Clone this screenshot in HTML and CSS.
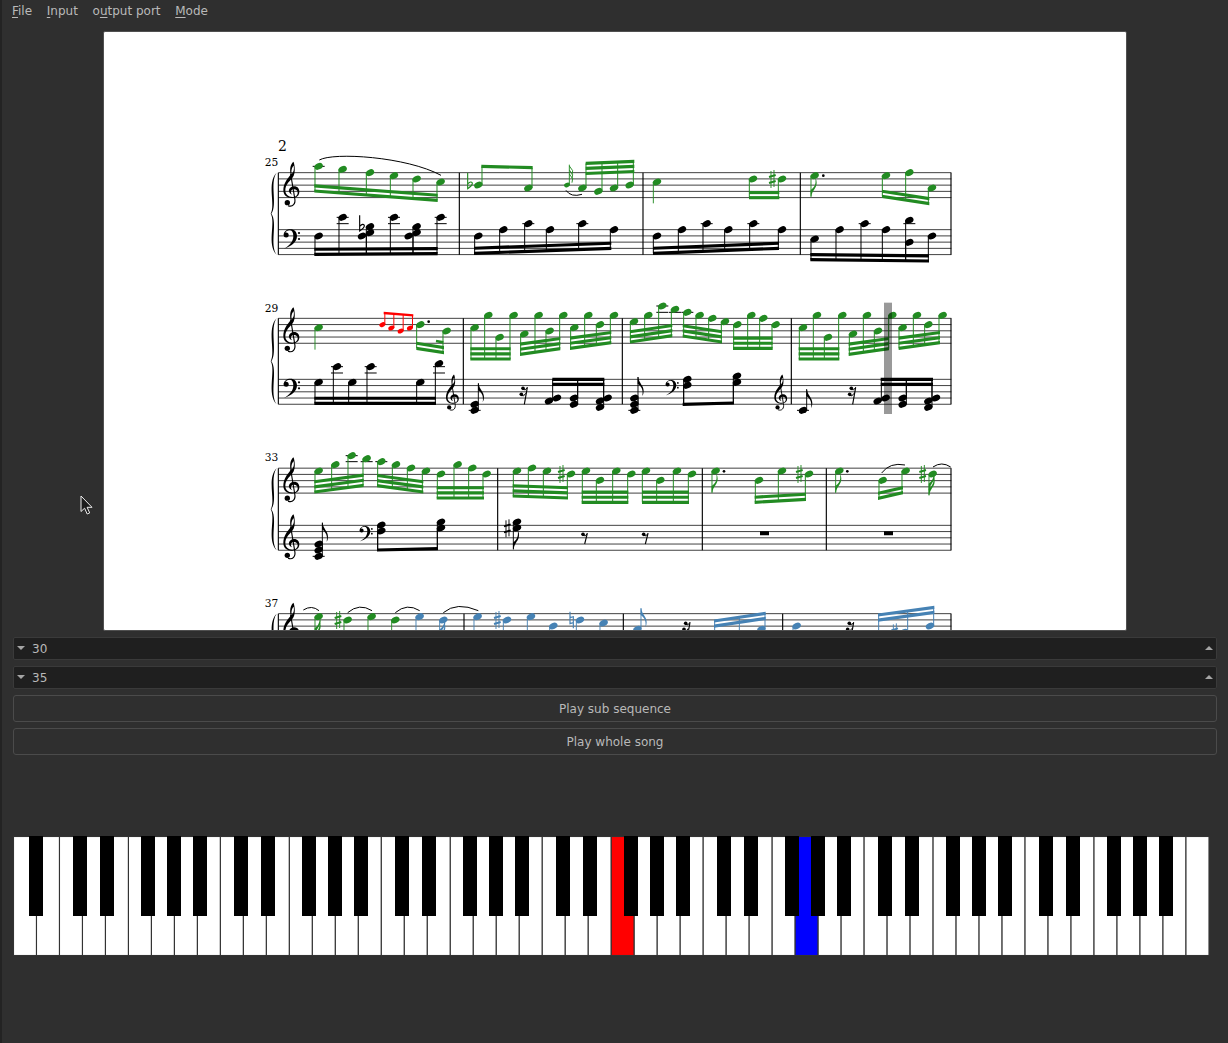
FILE: index.html
```html
<!DOCTYPE html>
<html lang="en">
<head>
<meta charset="utf-8">
<title>Piano trainer</title>
<link rel="stylesheet" href="styles.css">
</head>
<body>
<nav class="menu">
  <span><u>F</u>ile</span><span><u>I</u>nput</span><span>o<u>u</u>tput port</span><span><u>M</u>ode</span>
</nav>
<main class="content">
  <div class="score"><svg id="score" width="1022" height="598" viewBox="104 32 1022 598"></svg></div>
  <div class="controls">
    <div class="spin"><i class="down"></i><span>30</span><i class="up"></i></div>
    <div class="spin"><i class="down"></i><span>35</span><i class="up"></i></div>
    <button class="btn">Play sub sequence</button>
    <button class="btn">Play whole song</button>
  </div>
  <svg id="piano" class="piano" width="1198" height="122" viewBox="0 0 1198 122"></svg>
</main>
<svg class="pointer" width="14" height="22" viewBox="0 0 14 22"><path d="M1 1V16.5L4.6 13.2L7.2 19L9.7 17.9L7.1 12.3H12Z" fill="#1c1c1c" stroke="#eee" stroke-width="1"/></svg>
<script src="app.js"></script>
</body>
</html>
```
FILE: styles.css
```css
* { box-sizing: border-box; }
body {
  margin: 0;
  width: 1228px;
  height: 1043px;
  overflow: hidden;
  background: #2f2f2f;
  border-left: 2px solid #232323;
  color: #b9b9b9;
  font: 12px "DejaVu Sans", sans-serif;
}
.menu {
  display: flex;
  gap: 14.7px;
  height: 31px;
  padding: 4px 10px 0;
  line-height: 14px;
}
.menu u { text-underline-offset: 2px; }
.content {
  display: flex;
  flex-direction: column;
  padding: 0 11px;
}
.score {
  width: 1024px;
  height: 600px;
  margin-left: 90px;
  border: 1px solid #505050;
  border-radius: 2px;
  background: #fff;
}
.score svg { display: block; }
.controls {
  display: flex;
  flex-direction: column;
  width: 1204px;
  margin-top: 6px;
}
.spin {
  display: flex;
  align-items: center;
  height: 23px;
  margin-bottom: 6px;
  padding: 0 3px;
  border: 1px solid #3a3a3a;
  border-radius: 2px;
  background: #1f1f1f;
}
.spin span { flex: 1; margin-left: 7px; }
.spin i {
  margin-bottom: 2px;
  border-left: 4px solid transparent;
  border-right: 4px solid transparent;
}
.spin .down { border-top: 4px solid #a5a5a5; }
.spin .up { border-bottom: 4px solid #a5a5a5; }
.btn {
  height: 27px;
  margin: 0 0 6px;
  padding: 0;
  border: 1px solid #4b4b4b;
  border-radius: 3px;
  background: #2f2f2f;
  color: #b9b9b9;
  font: inherit;
}
.piano { display: block; margin-top: 75px; }
.pointer {
  position: absolute;
  left: 80px;
  top: 495px;
}
.num { font-family: "DejaVu Serif", serif; }
```
FILE: app.js
```js
const GREEN = '#228b22', BLUE = '#4682b4', RED = '#ff0000', BLACK = '#000';
let out = '';
const add = s => { out += s; };
const pairs = s => s.trim().split(/\s+/).map(p => p.split(',').map(Number));

// Frames use three units per pixel.
const frame = (x, y, draw) => {
  add(`<g transform="translate(${x} ${y}) scale(.33333)">`);
  draw();
  add('</g>');
};
const path = (d, c = BLACK, w = 0) =>
  add(`<path d="${d}" fill="${w ? 'none' : c}"${w ? ` stroke="${c}" stroke-width="${w}"` : ''}/>`);
const line = (x1, y1, x2, y2, c = BLACK, w = 3) =>
  add(`<line x1="${x1}" y1="${y1}" x2="${x2}" y2="${y2}" stroke="${c}" stroke-width="${w}"/>`);
const head = (x, y, c = BLACK, k = 1) =>
  add(`<ellipse cx="0" cy="0" rx="13.2" ry="9.2" fill="${c}" transform="translate(${x} ${y}) scale(${k}) rotate(-26)"/>`);
const heads = (s, c) => pairs(s).forEach(([x, y]) => head(x, y, c));
const ledgers = s => pairs(s).forEach(([x, y]) => line(x - 18, y, x + 18, y, BLACK, 3));
const dot = (x, y) => add(`<circle cx="${x}" cy="${y}" r="4"/>`);

// Outer beam runs x1,y1 to x2,y2; further beams step towards the heads.
const beam = (c, dir, x1, y1, x2, y2, n, notes, k = 1) => {
  pairs(notes).forEach(([x, y]) => {
    const sx = x - dir * (k < 1 ? 7.5 : 11);
    line(sx, y, sx, y1 + (y2 - y1) * (sx - x1) / (x2 - x1), c, 3);
    head(x, y, c, k);
  });
  for (let i = 0; i < n; i++) {
    const o = -dir * i * 15.3, t = k < 1 ? 3.6 : 4.7;
    path(`M${x1 - 2} ${y1 + o - t}L${x2 + 2} ${y2 + o - t}V${y2 + o + t}L${x1 - 2} ${y1 + o + t}Z`, c);
  }
};
const flag = (x, y, dir, c) =>
  add(`<path transform="translate(${x} ${y}) scale(1 ${dir})" d="M-1 0H1C3 20 17 25 17 42Q17 51 13 57Q16 40 9 30Q5 24 -1 20Z" fill="${c}"/>`);
const single = (c, dir, x, y, end, flags = 0) => {
  const sx = x - dir * 11;
  line(sx, y, sx, end, c, 2.8);
  head(x, y, c);
  for (let i = 0; i < flags; i++) flag(sx, end - dir * i * 15, -dir, c);
};
const treble = (x, y, k = 1) => add(`<g transform="translate(${x} ${y}) scale(${k})">
  <path fill-rule="evenodd" d="M30-89C22-82 18-68 22-50C12-38 0-24 0-3C0 13 13 21 27 20C42 19 48 11 48 1C48-9 41-16 31-15C20-14 14-4 18 3C20 7 23 9 27 10C21 5 21-4 30-6C38-7 43-2 43 4C43 12 36 17 27 17C14 17 6 9 6-3C6-18 16-28 27-40C34-48 35-60 34-72C33-82 32-86 30-89ZM31-77C33-66 31-58 25-52C23-62 26-73 31-77Z"/>
  <path d="M22-52L34 20C38 38 28 48 14 43" fill="none" stroke="#000" stroke-width="3.400"/><circle cx="12" cy="34" r="8"/></g>`);
const bass = (x, y, k = 1) => add(`<g transform="translate(${x} ${y}) scale(${k})">
  <path d="M1-4C2-14 11-20 21-20C33-20 41-12 41 0C41 18 24 31 2 38C20 28 30 16 30 0C30-11 26-17 19-17C12-17 8-14 6-9Z"/>
  <circle cx="8.500" cy="-3" r="7.500"/><circle cx="47" cy="-9" r="3.300"/><circle cx="47" cy="9" r="3.300"/></g>`);
const flat = (x, y, c) => path(`M${x - 6} ${y - 36}V${y + 11}Q${x + 9} ${y + 1} ${x + 8} ${y - 6}Q${x + 4} ${y - 13} ${x - 5} ${y - 4}`, c, 3.4);
const sharp = (x, y, c = BLACK) => {
  line(x - 4, y - 24, x - 4, y + 27, c, 2.8);
  line(x + 5, y - 27, x + 5, y + 24, c, 2.8);
  line(x - 10, y - 6, x + 10, y - 12, c, 5.5);
  line(x - 10, y + 12, x + 10, y + 6, c, 5.5);
};
const natural = (x, y, c) => {
  path(`M${x - 5} ${y - 21}V${y + 15}L${x + 5} ${y + 12}M${x + 5} ${y + 29}V${y - 6}L${x - 5} ${y - 3}`, c, 3.5);
};
const rest = (x, y, n) => {
  path(`M${x + 8} ${y - 14}L${x - (n > 1 ? 1 : 0)} ${y + (n > 1 ? 37 : 18)}`, BLACK, 3.4);
  for (let i = 0; i < n; i++) {
    const px = x - i * 5, py = y + i * 18;
    add(`<circle cx="${px - 5}" cy="${py - 11}" r="5.500"/>`);
    path(`M${px - 6} ${py - 8}Q${px + 3} ${py - 2} ${px + 8} ${py - 14}`, BLACK, 3);
  }
};
const staff = y => { for (let i = 0; i < 5; i++) line(55, y + i * 18.7, 2074, y + i * 18.7, '#111', 2.4); };
const system = (number, ny, top, low, bars) => {
  add(`<text class="num" x="14" y="${ny}" font-size="32">${number}</text>`);
  staff(top);
  staff(low);
  const end = low + 75, mid = (top + end) / 2;
  line(55, top, 55, end, BLACK, 3.4);
  bars.forEach(x => line(x, top, x, end, BLACK, 3.4));
  path(`M50 ${top}C28 ${top + 30} 54 ${mid - 26} 34 ${mid}C54 ${mid + 26} 28 ${end - 30} 50 ${end}C19 ${end - 30} 48 ${mid + 26} 32 ${mid}C48 ${mid - 26} 19 ${top + 30} 50 ${top}Z`);
  treble(70, top + 56);
};

add('<text class="num" x="278" y="151" font-size="14">2</text>');

// Measures 25-28
frame(260, 130, () => {
  system(25, 107, 128, 299, [598, 1149, 1621, 2073]);
  bass(70, 318);
  ledgers('176,109 248,262 248,281 402,262 402,281 542,262 542,281 805,281 967,281');
  beam(GREEN, 1, 165, 183, 531, 211, 2, '176,109 248,118 330,128 402,137 470,147 542,156');
  path('M178 90C220 66 440 80 543 136', BLACK, 3);
  beam(BLACK, 1, 165, 373, 531, 371, 2, '176,318 248,262 330,290 330,308 402,262 470,290 470,308 542,262');
  heads('306,318 446,318', BLACK);
  flat(305, 292, BLACK);
  flat(629, 165, GREEN);
  beam(GREEN, -1, 666, 109, 816, 113, 1, '655,165 805,174');
  line(928, 165, 928, 104, GREEN, 2.8);
  head(921, 165, GREEN, .7);
  [108, 120, 132].forEach(y => path(`M928 ${y}L938 ${y + 14}L936 ${y + 26}`, GREEN, 2.8));
  path('M918 181Q933 203 966 193', BLACK, 3);
  beam(GREEN, -1, 979, 100, 1121, 94, 3, '967,174 1015,184 1062,174 1109,165');
  beam(BLACK, 1, 644, 370, 1052, 355, 2, '655,318 730,299 805,281 870,299 967,281 1062,299');
});
frame(600, 130, () => {
  ledgers('320,281 460,281 794,281 928,281');
  single(GREEN, 1, 171, 156, 220);
  beam(GREEN, 1, 449, 203, 536, 203, 2, '459,147 546,147');
  sharp(517, 147, GREEN);
  beam(BLACK, 1, 161, 370, 535, 355, 2, '171,318 246,299 320,281 385,299 460,281 546,299');
  single(GREEN, 1, 644, 137, 200, 1);
  dot(670, 137);
  beam(GREEN, 1, 848, 199, 986, 221, 2, '858,137 928,128 996,174');
  beam(BLACK, 1, 633, 389, 985, 393, 2, '644,327 719,299 794,281 858,299 928,271 928,337 996,318');
});

// Measures 29-32
frame(260, 290, () => {
  system(29, 65, 85, 268, [610, 1087, 1594, 2073]);
  bass(70, 286);
  ledgers('231,230 231,249 332,230 332,249 537,230 537,249 644,361');
  single(GREEN, 1, 176, 113, 179);
  beam(RED, -1, 373, 69, 458, 76, 1, '367,104 394,114 422,123 450,114', .72);
  beam(GREEN, 1, 471, 175, 550, 188, 2, '481,104 560,123');
  line(528, 153, 550, 157, GREEN, 8);
  dot(506, 95);
  beam(BLACK, 1, 165, 340, 526, 340, 2, '176,277 231,230 277,277 332,230 481,277 537,221');
  treble(558, 325, .8);
  beam(GREEN, 1, 633, 207, 750, 207, 3, '644,113 685,76 719,142 761,76');
  beam(GREEN, 1, 782, 193, 899, 176, 3, '793,132 836,76 869,123 910,76');
  beam(GREEN, 1, 932, 175, 1052, 158, 3, '943,113 985,76 1020,104 1062,76');
  single(BLACK, -1, 644, 343, 280, 1);
  single(BLACK, -1, 644, 361, 343);
  rest(794, 306, 2);
  beam(BLACK, -1, 879, 268, 1031, 268, 2, '867,333 942,324 942,343 1020,333 1020,352');
  heads('891,324 1043,324', BLACK);
});
frame(600, 290, () => {
  ledgers('187,48 187,67 225,67 262,67 103,361 609,361');
  beam(GREEN, 1, 92, 156, 215, 137, 3, '102,95 145,76 187,48 225,58');
  beam(GREEN, 1, 250, 138, 364, 156, 3, '262,67 299,76 337,85 375,95');
  beam(GREEN, 1, 401, 175, 516, 175, 3, '412,104 454,76 490,85 527,104');
  single(BLACK, -1, 103, 324, 261, 1);
  single(BLACK, -1, 103, 343, 324);
  single(BLACK, -1, 103, 361, 324);
  bass(196, 286, .8);
  beam(BLACK, 1, 250, 343, 400, 339, 1, '262,268 262,286 411,258 411,277');
  treble(523, 325, .8);
  beam(GREEN, 1, 598, 207, 716, 207, 3, '609,113 651,76 684,142 727,76');
  beam(GREEN, 1, 748, 193, 865, 176, 3, '759,132 801,76 834,123 877,76');
  beam(GREEN, 1, 898, 175, 1018, 158, 3, '908,113 951,76 985,104 1028,76');
  single(BLACK, -1, 609, 361, 298, 1);
  rest(759, 306, 2);
  beam(BLACK, -1, 844, 268, 997, 268, 2, '833,333 908,324 908,343 985,333 985,352');
  heads('857,324 1008,324', BLACK);
  add('<rect x="852" y="38" width="24" height="334" fill="#000" fill-opacity=".4"/>');
});

// Measures 33-36
frame(260, 440, () => {
  system(33, 63, 84.5, 256, [713, 1327, 1699, 2073]);
  treble(70, 312);
  ledgers('275,47 275,65 320,65 364,65 176,349');
  beam(GREEN, 1, 165, 156, 309, 136, 3, '176,93 226,74 275,47 320,56');
  beam(GREEN, 1, 353, 137, 488, 156, 3, '364,65 408,74 453,84 498,93');
  beam(GREEN, 1, 532, 174, 670, 174, 3, '543,102 593,74 637,84 680,102');
  beam(GREEN, 1, 760, 168, 922, 174, 3, '771,93 816,84 861,93 933,102');
  sharp(904, 102, GREEN);
  beam(GREEN, 1, 967, 187, 1103, 187, 3, '978,93 1020,121 1069,93 1114,102');
  single(BLACK, -1, 176, 312, 248, 1);
  single(BLACK, -1, 176, 330, 312);
  single(BLACK, -1, 176, 349, 312);
  bass(298, 274, .8);
  beam(BLACK, 1, 353, 330, 532, 326, 1, '364,255 364,273 543,246 543,264');
  sharp(742, 265);
  single(BLACK, 1, 771, 246, 264);
  single(BLACK, 1, 771, 264, 328, 1);
  rest(974, 294, 1);
});
frame(600, 440, () => {
  rest(136, 294, 1);
  beam(GREEN, 1, 128, 187, 265, 187, 3, '138,93 181,121 231,93 276,102');
  single(GREEN, 1, 347, 93, 158, 1);
  dot(372, 94);
  beam(GREEN, 1, 466, 187, 616, 178, 2, '477,121 546,93 627,102');
  sharp(598, 102, GREEN);
  add('<path d="M480 274H507V286H480ZM852 274H879V286H852Z"/>');
  single(GREEN, 1, 718, 93, 158, 1);
  dot(742, 94);
  beam(GREEN, 1, 836, 175, 907, 158, 2, '848,121 917,93');
  path('M845 99Q870 66 915 75', BLACK, 3);
  sharp(968, 102, GREEN);
  single(GREEN, 1, 998, 102, 166, 2);
  path('M999 81Q1025 63 1052 81', BLACK, 3);
});

// Measures 37-40, cut off by the bottom of the view
frame(260, 590, () => {
  system(37, 50, 71, 242, [612, 1090, 1568, 2073]);
  single(GREEN, 1, 176, 80, 150, 2);
  sharp(234, 90, GREEN);
  single(GREEN, 1, 263, 90, 150);
  single(GREEN, 1, 335, 80, 150);
  single(GREEN, 1, 406, 90, 150);
  single(BLUE, 1, 479, 80, 150);
  single(BLUE, 1, 550, 90, 154, 2);
  single(BLUE, 1, 653, 80, 150);
  sharp(712, 90, BLUE);
  single(BLUE, 1, 741, 90, 150);
  single(BLUE, 1, 813, 80, 150);
  single(BLUE, 1, 880, 108, 150);
  natural(935, 86, BLUE);
  single(BLUE, 1, 960, 90, 150);
  single(BLUE, 1, 1031, 99, 150);
  path('M130 60Q155 44 177 62M263 68Q298 38 336 62M406 68Q441 38 479 62M550 68Q590 34 655 62', BLACK, 3);
});
frame(600, 590, () => {
  single(BLUE, -1, 112, 118, 55, 1);
  rest(262, 111, 2);
  beam(BLUE, -1, 344, 93, 495, 70, 2, '333,140 407,136 484,118');
  single(BLUE, 1, 590, 108, 150);
  rest(753, 111, 2);
  beam(BLUE, -1, 836, 75, 1001, 52, 2, '825,145 912,127 990,108');
  sharp(884, 127, BLUE);
});
document.getElementById('score').innerHTML = out;

// Piano: 52 white keys starting on A, black keys laid over them.
out = '';
const held = { 26: '#ff0000', 34: '#0000ff' };
for (let i = 0; i < 52; i++) {
  add(`<rect x="${.5 + i * 22.99}" y=".5" width="22.99" height="119" fill="${held[i] || '#fff'}" stroke="#333" stroke-width="1.1"/>`);
}
const shift = { 3: -9, 4: -5, 6: -10, 0: -7, 1: -4 };
for (let i = 1; i < 52; i++) {
  const s = i === 1 ? -7 : shift[i % 7];
  if (s !== undefined) add(`<rect x="${Math.round(i * 22.99) + s}" y="0" width="14" height="80"/>`);
}
document.getElementById('piano').innerHTML = out;
```
